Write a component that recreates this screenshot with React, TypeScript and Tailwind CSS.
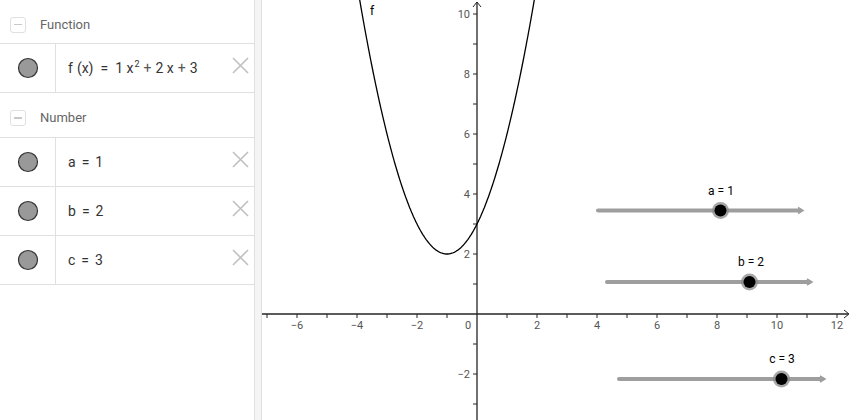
import React from 'react'

const OX = 215
const OY = 314
const S = 30

const px = (x: number) => OX + x * S
const py = (y: number) => OY - y * S

function Circle() {
  return (
    <svg width="22" height="22" viewBox="0 0 22 22">
      <circle cx="11" cy="11" r="9.5" fill="#999999" stroke="#333333" strokeWidth="1.2" />
    </svg>
  )
}

function Cross() {
  return (
    <svg width="19" height="19" viewBox="0 0 19 19">
      <path d="M2 2 L17 17 M17 2 L2 17" stroke="#c0c0c0" strokeWidth="1.6" />
    </svg>
  )
}

function Header({ label, h }: { label: string; h: string }) {
  return (
    <div className={`${h} flex items-center pt-[6px] border-b border-[#e0e0e0]`}>
      <div className="w-[40px] flex items-center pl-[10px]">
        <div className="w-[16px] h-[16px] rounded-[3px] border border-[#e0e0e0] flex items-center justify-center">
          <div className="w-[8px] h-[1.5px] bg-[#c8c8c8]" />
        </div>
      </div>
      <span className="text-[13px] text-[#666666]">{label}</span>
    </div>
  )
}

function Row({ children }: { children: React.ReactNode }) {
  return (
    <div className="flex h-[49px] border-b border-[#e0e0e0]">
      <div className="w-[56px] flex items-center justify-center border-r border-[#e0e0e0] pl-[1px]">
        <Circle />
      </div>
      <div className="flex-1 flex items-center pl-[12px] text-[14px] text-[#333333]">{children}</div>
      <div className="w-[28px] flex items-center justify-center pb-[5px]">
        <Cross />
      </div>
    </div>
  )
}

function Slider({ x1, x2, y, p, label, lx }: { x1: number; x2: number; y: number; p: number; label: string; lx: number }) {
  return (
    <g>
      <line x1={x1} y1={y} x2={x2 - 3} y2={y} stroke="#9e9e9e" strokeWidth="4" strokeLinecap="round" />
      <path d={`M${x2 - 5} ${y - 3} L${x2} ${y} L${x2 - 5} ${y + 3}`} fill="none" stroke="#9e9e9e" strokeWidth="1.5" />
      <circle cx={p} cy={y} r="8.5" fill="#8a8a8a" opacity="0.75" />
      <circle cx={p} cy={y} r="6" fill="#000000" />
      <text x={lx} y={y - 16} textAnchor="middle" fontSize="12" fill="#000000" fontFamily="Roboto, sans-serif">{label}</text>
    </g>
  )
}

export default function App() {
  const pts: string[] = []
  for (let x = -4; x <= 2.0001; x += 0.02) {
    pts.push(`${px(x).toFixed(1)},${py(x * x + 2 * x + 3).toFixed(1)}`)
  }
  const xTicks = Array.from({ length: 20 }, (_, i) => i - 7)
  const yTicks = [-3, -2, -1, 1, 2, 3, 4, 5, 6, 7, 8, 9, 10]

  return (
    <div className="flex w-[851px] h-[420px] bg-white overflow-hidden font-['Roboto',sans-serif]">
      <div className="w-[254px] flex flex-col">
        <Header label="Function" h="h-[44px]" />
        <Row>
          <span className="whitespace-nowrap">
            f<span className="ml-[4px]">(x)</span>
            <span className="mx-[7px]">=</span>1 x<span className="text-[9px] relative -top-[6px] ml-[1px]">2</span>
            <span className="mx-[4px] text-[#555]">+</span>2 x<span className="mx-[4px] text-[#555]">+</span>3
          </span>
        </Row>
        <Header label="Number" h="h-[45px]" />
        <Row><span>a<span className="mx-[6px]">=</span>1</span></Row>
        <Row><span>b<span className="mx-[6px]">=</span>2</span></Row>
        <Row><span>c<span className="mx-[6px]">=</span>3</span></Row>
      </div>
      <div className="w-[8px] bg-[#f4f4f4] border-l border-r border-[#e0e0e0]" />
      <svg width="589" height="420" viewBox="0 0 589 420" className="block">
        {/* axes */}
        <line x1="0" y1={OY} x2="586" y2={OY} stroke="#252525" strokeWidth="1.3" />
        <path d={`M582 ${OY - 4} L587 ${OY} L582 ${OY + 4}`} fill="none" stroke="#252525" strokeWidth="1" />
        <line x1={OX} y1="2" x2={OX} y2="420" stroke="#252525" strokeWidth="1.3" />
        <path d={`M${OX - 4} 7 L${OX} 2 L${OX + 4} 7`} fill="none" stroke="#252525" strokeWidth="1" />
        {xTicks.filter(t => t !== 0).map(t => (
          <line key={t} x1={px(t)} y1={OY} x2={px(t)} y2={OY + 4} stroke="#252525" strokeWidth="1" />
        ))}
        {yTicks.map(t => (
          <line key={t} x1={OX - 4} y1={py(t)} x2={OX} y2={py(t)} stroke="#252525" strokeWidth="1" />
        ))}
        <g fontSize="11" fill="#555555" fontFamily="Roboto, sans-serif">
          {[-6, -4, -2, 2, 4, 6, 8, 10, 12].map(t => (
            <text key={t} x={px(t)} y={OY + 15} textAnchor="middle">{t < 0 ? `−${-t}` : t}</text>
          ))}
          <text x={OX - 9} y={OY + 15} textAnchor="middle">0</text>
          {[-2, 2, 4, 6, 8, 10].map(t => (
            <text key={t} x={OX - 7} y={py(t) + 4} textAnchor="end">{t < 0 ? `−${-t}` : t}</text>
          ))}
        </g>
        {/* parabola */}
        <polyline points={pts.join(' ')} fill="none" stroke="#000000" strokeWidth="1.3" />
        <text x="108" y="15" fontSize="12" fill="#000000" fontFamily="Roboto, sans-serif">f</text>
        {/* sliders */}
        <Slider x1={336} x2={541} y={210.5} p={458.5} label="a = 1" lx={459} />
        <Slider x1={345} x2={550} y={282} p={487.5} label="b = 2" lx={489} />
        <Slider x1={357} x2={563} y={379} p={519.5} label="c = 3" lx={520} />
      </svg>
    </div>
  )
}
